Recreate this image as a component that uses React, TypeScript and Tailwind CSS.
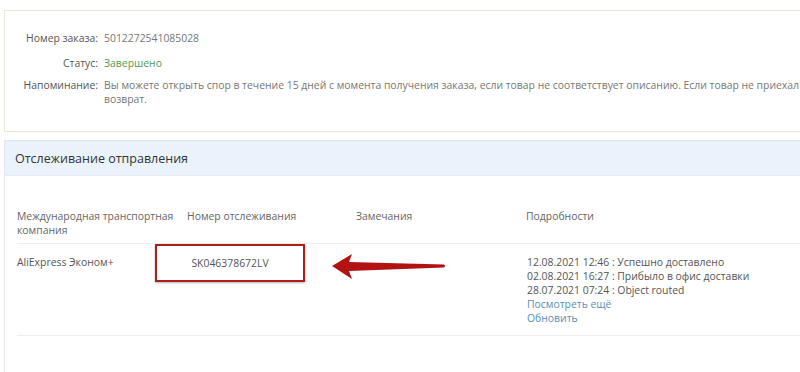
const font = { fontFamily: '"Open Sans", "Noto Sans", sans-serif' };

function InfoRow({ label, children }: { label: string; children: React.ReactNode }) {
    return (
        <div className="flex">
            <span className="w-[93px] shrink-0 text-right text-[#555]">{label}</span>
            <div className="pl-[6px] min-w-0">{children}</div>
        </div>
    );
}

function Arrow() {
    return (
        <svg width="116" height="30" viewBox="0 0 116 30" className="mt-[8px]">
            <path d="M0 14 L20 2 L17 10 L112 12.5 Q114 14 112 15.5 L17 19 L20 27 Z" fill="#b31212" />
        </svg>
    );
}

export default function App() {
    return (
        <div className="w-[800px] h-[372px] overflow-hidden bg-white text-[10.4px] leading-[14px]" style={font}>
            <div className="ml-[4px] mt-[10px] w-[830px] h-[122px] border border-[#ece6d8] pt-[20px] flex flex-col">
                <InfoRow label="Номер заказа:">
                    <span className="text-[#777]">5012272541085028</span>
                </InfoRow>
                <div className="mt-[11px]">
                    <InfoRow label="Статус:">
                        <span className="text-[#4f9a55]">Завершено</span>
                    </InfoRow>
                </div>
                <div className="mt-[8px]">
                    <InfoRow label="Напоминание:">
                        <div className="text-[#777]">
                            <div className="whitespace-nowrap">
                                Вы можете открыть спор в течение 15 дней с момента получения заказа, если товар не соответствует описанию. Если товар не приехал или пришёл повреждённым, вы можете запросить
                            </div>
                            <div>возврат.</div>
                        </div>
                    </InfoRow>
                </div>
            </div>

            <div className="ml-[4px] mt-[8px] w-[830px] h-[240px] border border-[#e3e8ee]">
                <div className="h-[35px] bg-[#eaf3fc] border-b border-[#e3ecf5] flex items-center pl-[10px] pt-[2px] text-[12.5px] text-[#333]">
                    Отслеживание отправления
                </div>
                <div className="pl-[12px] pt-[33px]">
                    <div className="flex text-[#666] h-[35px] border-b border-[#eeeeee]">
                        <div className="w-[170px]">Международная транспортная компания</div>
                        <div className="w-[169px]">Номер отслеживания</div>
                        <div className="w-[170px]">Замечания</div>
                        <div>Подробности</div>
                    </div>
                    <div className="flex h-[92px] border-b border-[#eeeeee] text-[#555]">
                        <div className="w-[138px] pt-[11px]">AliExpress Эконом+</div>
                        <div className="w-[150px] h-[38px] border-2 border-[#b01d1d] flex justify-center pt-[10px] shadow-[0_1px_2px_rgba(0,0,0,0.3)]">
                            SK046378672LV
                        </div>
                        <div className="w-[222px] pl-[27px]">
                            <Arrow />
                        </div>
                        <div className="pt-[11px]">
                            <div>12.08.2021 12:46 : Успешно доставлено</div>
                            <div>02.08.2021 16:27 : Прибыло в офис доставки</div>
                            <div>28.07.2021 07:24 : Object routed</div>
                            <div className="text-[#5a8fb8]">Посмотреть ещё</div>
                            <div className="text-[#5a8fb8]">Обновить</div>
                        </div>
                    </div>
                </div>
            </div>
        </div>
    );
}
